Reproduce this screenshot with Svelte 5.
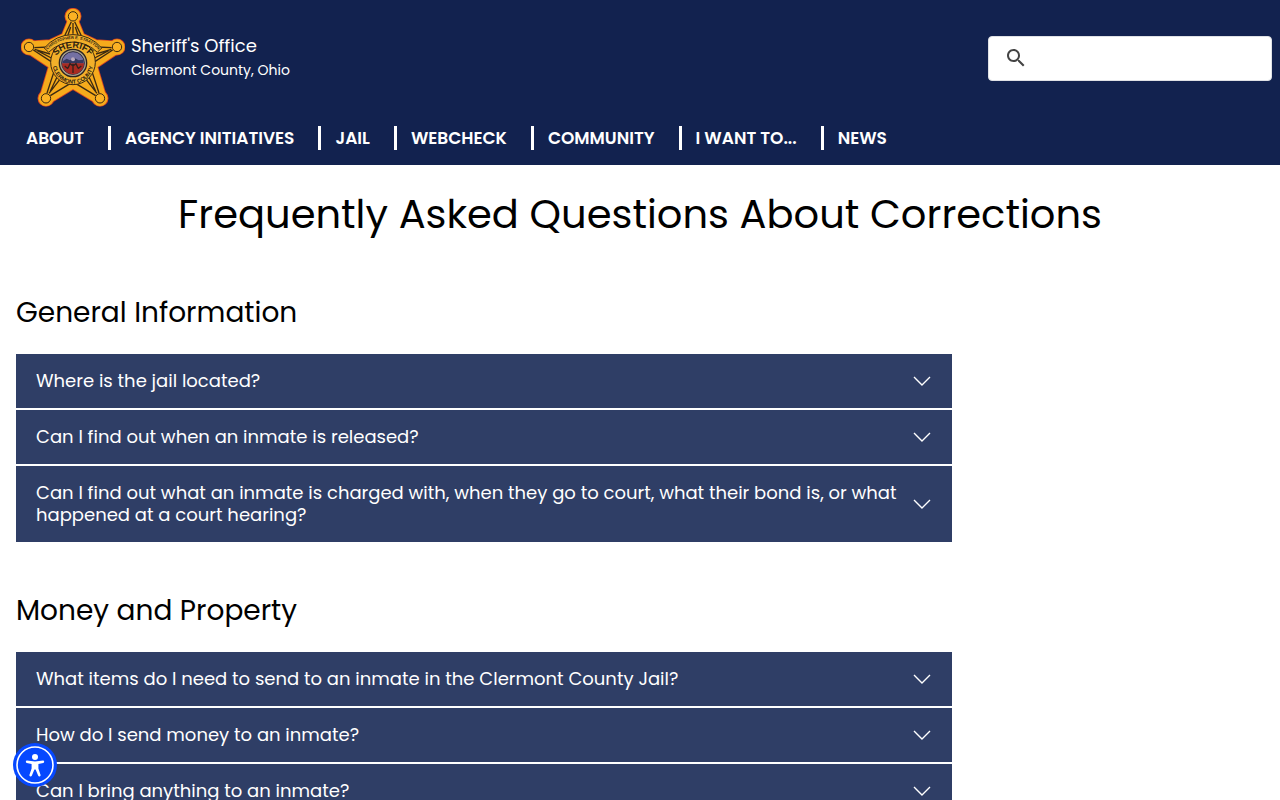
<script lang="ts">
  interface FaqItem {
    question: string;
    answer:   string;
  }

  interface FaqSection {
    title: string;
    items: FaqItem[];
  }

  const navItems = [
    'About',
    'Agency Initiatives',
    'Jail',
    'WebCheck',
    'Community',
    'I Want To...',
    'News',
  ];

  const sections: FaqSection[] = [
    {
      title: 'General Information',
      items: [
        { question: 'Where is the jail located?', answer: '' },
        { question: 'Can I find out when an inmate is released?', answer: '' },
        {
          question: 'Can I find out what an inmate is charged with, when they go to court, what their bond is, or what happened at a court hearing?',
          answer: '',
        },
      ],
    },
    {
      title: 'Money and Property',
      items: [
        { question: 'What items do I need to send to an inmate in the Clermont County Jail?', answer: '' },
        { question: 'How do I send money to an inmate?', answer: '' },
        { question: 'Can I bring anything to an inmate?', answer: '' },
      ],
    },
  ];

  // ball tips of the badge, clockwise from the top
  const tips = [
    { x: 189, y: 52 },
    { x: 321, y: 144 },
    { x: 270, y: 298 },
    { x: 108, y: 298 },
    { x: 57,  y: 144 },
  ];

  const starPath = 'M176 66 L202 66 L219 108 L258 126 L313 130 L326 158 L259 203 L285 291 L258 309 L189 267 L120 309 L93 291 L119 203 L52 158 L65 130 L120 126 L159 108 Z';

  let openKey = $state('');
  let query   = $state('');

  function toggle(key: string) {
    openKey = openKey === key ? '' : key;
  }
</script>

<header class="site-header">
  <div class="top-row">
    <a class="brand" href="#home">
      <svg class="badge" viewBox="33 27 312 300" aria-hidden="true">
        <defs>
          <path id="arc-name" d="M111 154 A106 106 0 0 1 267 154" />
          <path id="arc-sheriff" d="M134 176 A66 66 0 0 1 244 176" />
          <path id="arc-county" d="M128 193 A61 61 0 0 0 250 193" />
        </defs>
        <g class="rim">
          <path d={starPath} />
          {#each tips as tip}
            <circle cx={tip.x} cy={tip.y} r="20" />
          {/each}
        </g>
        <g class="gold">
          <path d={starPath} />
          {#each tips as tip}
            <circle cx={tip.x} cy={tip.y} r="20" />
          {/each}
        </g>
        <g class="rays">
          <path d="M184 68 L164 110 M194 68 L214 110 M189 72 V104 M182 84 L174 108 M196 84 L204 108" />
          <path d="M305 146 L260 144 M308 153 L251 190 M304 151 L258 165 M296 155 L254 177" />
          <path d="M73 146 L118 144 M70 153 L127 190 M74 151 L120 165 M82 155 L124 177" />
          <path d="M267 282 L244 212 M257 290 L193 251 M261 283 L224 236 M257 276 L234 228" />
          <path d="M111 282 L134 212 M121 290 L185 251 M117 283 L154 236 M121 276 L144 228" />
        </g>
        {#each tips as tip}
          <circle class="tip" cx={tip.x} cy={tip.y} r="14" />
        {/each}
        <circle class="disc" cx="189" cy="190" r="67" />
        <path class="banner" d="M103 147 A112 112 0 0 1 275 147 L262 160 A102 102 0 0 0 116 160 Z" />
        <circle class="seal-ring" cx="189" cy="192" r="41" />
        <circle class="sky" cx="189" cy="192" r="34" />
        <path class="hills" d="M158 187 L170 179 L180 184 L192 176 L206 184 L220 182 V193 H158 Z" />
        <path class="field" d="M156 193 H222 A33 33 0 0 1 156 193 Z" />
        <path class="sheaf" d="M174 208 L180 194 L189 201 L198 194 L204 208 M189 194 V222 M164 201 L174 209 M214 201 L204 209" />
        <circle class="sun" cx="189" cy="181" r="6" />
        <text class="name-text" text-anchor="middle"><textPath href="#arc-name" startOffset="50%">CHRISTOPHER E. STRATTON</textPath></text>
        <text class="sheriff-text" text-anchor="middle"><textPath href="#arc-sheriff" startOffset="50%">SHERIFF</textPath></text>
        <text class="county-text" text-anchor="middle"><textPath href="#arc-county" startOffset="50%">CLERMONT COUNTY</textPath></text>
      </svg>
      <span class="brand-text">
        <span class="brand-name">Sheriff's Office</span>
        <span class="brand-place">Clermont County, Ohio</span>
      </span>
    </a>

    <form class="search" role="search" onsubmit={(e) => e.preventDefault()}>
      <button class="search-button" type="submit" aria-label="Search">
        <svg viewBox="0 0 24 24" aria-hidden="true">
          <path d="M15.5 14h-.79l-.28-.27C15.41 12.59 16 11.11 16 9.5 16 5.91 13.09 3 9.5 3S3 5.91 3 9.5 5.91 16 9.5 16c1.61 0 3.09-.59 4.23-1.57l.27.28v.79l5 4.99L20.49 19l-4.99-5zm-6 0C7.01 14 5 11.99 5 9.5S7.01 5 9.5 5 14 7.01 14 9.5 11.99 14 9.5 14z" />
        </svg>
      </button>
      <input type="text" aria-label="Search the site" bind:value={query} />
    </form>
  </div>

  <nav class="main-nav" aria-label="Main">
    {#each navItems as item}
      <a href="#nav">{item}</a>
    {/each}
  </nav>
</header>

<main>
  <h1>Frequently Asked Questions About Corrections</h1>

  {#each sections as section}
    <section>
      <h2>{section.title}</h2>
      <div class="accordion">
        {#each section.items as item}
          <div>
            <button
              class="question"
              type="button"
              aria-expanded={openKey === item.question}
              onclick={() => toggle(item.question)}
            >
              <span>{item.question}</span>
              <svg class="chevron" viewBox="0 0 20 10" aria-hidden="true">
                <path d="M2 1 L10 9 L18 1" />
              </svg>
            </button>
            {#if openKey === item.question && item.answer}
              <p class="answer">{item.answer}</p>
            {/if}
          </div>
        {/each}
      </div>
    </section>
  {/each}
</main>

<button class="a11y" type="button" aria-label="Accessibility menu">
  <svg viewBox="0 0 44 44" aria-hidden="true">
    <circle class="a11y-ring" cx="22" cy="22" r="18" />
    <circle cx="22" cy="14" r="3" />
    <path d="M14 17.6 Q22 19.2 30 17.6 Q31.2 17.6 31.2 18.7 Q31.2 19.7 30.2 20 L25.4 21 V25.4 L27.6 32 Q27.7 33.2 26.6 33.5 Q25.6 33.6 25.1 32.6 L22.6 26.6 H21.4 L18.9 32.6 Q18.4 33.6 17.4 33.5 Q16.3 33.2 16.4 32 L18.6 25.4 V21 L13.8 20 Q12.8 19.7 12.8 18.7 Q12.8 17.6 14 17.6 Z" />
  </svg>
</button>

<style>
  :global(body) {
    margin: 0;
    background: #fff;
    color: #000;
    font-family: Poppins, Inter, sans-serif;
    overflow-x: hidden;
  }

  .site-header {
    background: #12224f;
    color: #fff;
    padding: 8px 8px 15px 21px;
  }

  .top-row {
    display: flex;
    justify-content: space-between;
    align-items: center;
  }

  .brand {
    display: flex;
    align-items: center;
    gap: 6px;
    color: inherit;
    text-decoration: none;
  }

  .badge {
    display: block;
    width: 104px;
    height: 100px;
  }

  .rim path,
  .rim circle {
    fill: #d8431f;
    stroke: #d8431f;
    stroke-width: 11;
    stroke-linejoin: round;
  }

  .gold path,
  .gold circle {
    fill: #f6ab1c;
    stroke: #f6ab1c;
    stroke-width: 6;
    stroke-linejoin: round;
  }

  .rays {
    fill: none;
    stroke: #3b2a12;
    stroke-width: 4;
  }

  .tip {
    fill: #fbb224;
    stroke: #3b2a12;
    stroke-width: 3;
  }

  .banner,
  .disc {
    fill: #f2b02a;
    stroke: #3b2a12;
    stroke-width: 3;
  }

  .seal-ring {
    fill: #a9a08c;
    stroke: #2a2320;
    stroke-width: 4;
  }

  .sky {
    fill: #7470a3;
    stroke: #2c2a3c;
    stroke-width: 3;
  }

  .hills {
    fill: #34385e;
  }

  .field {
    fill: #a92a20;
  }

  .sheaf {
    fill: none;
    stroke: #33211c;
    stroke-width: 4;
  }

  .sun {
    fill: #b9a9bd;
  }

  .name-text,
  .sheriff-text,
  .county-text {
    fill: #2c200f;
    font-family: "Liberation Sans", sans-serif;
    font-weight: 700;
  }

  .name-text {
    font-size: 12px;
  }

  .sheriff-text {
    font-size: 27px;
  }

  .county-text {
    font-size: 17px;
  }

  .brand-text {
    display: flex;
    flex-direction: column;
  }

  .brand-name {
    font-size: 18px;
    line-height: 24px;
  }

  .brand-place {
    font-size: 14px;
    line-height: 24px;
  }

  .search {
    display: flex;
    align-items: center;
    box-sizing: border-box;
    width: 284px;
    height: 45px;
    padding: 0 15px;
    gap: 8px;
    background: #fff;
    border: 1px solid #dfe1e5;
    border-radius: 4px;
  }

  .search-button {
    display: flex;
    padding: 0;
    border: 0;
    background: none;
    cursor: pointer;
  }

  .search-button svg {
    width: 24px;
    height: 24px;
    fill: #444;
  }

  .search input {
    flex: 1;
    min-width: 0;
    border: 0;
    outline: 0;
    background: transparent;
    font: inherit;
    font-size: 16px;
  }

  .main-nav {
    display: flex;
    flex-wrap: wrap;
    padding-top: 18px;
  }

  .main-nav a {
    padding: 0 24px 0 14px;
    border-right: 3px solid #fff;
    color: #fff;
    font-size: 17px;
    font-weight: 600;
    line-height: 24px;
    text-decoration: none;
    text-transform: uppercase;
  }

  .main-nav a:first-child {
    padding-left: 5px;
  }

  .main-nav a:last-child {
    border-right: 0;
  }

  main {
    padding: 0 16px;
  }

  h1 {
    margin: 24px 0 0;
    font-size: 40px;
    font-weight: 400;
    line-height: 50px;
    text-align: center;
  }

  h2 {
    margin: 0 0 23px;
    font-size: 28px;
    font-weight: 400;
    line-height: 36px;
  }

  section {
    width: 75%;
    margin-top: 51px;
  }

  h1 + section {
    margin-top: 56px;
  }

  .accordion {
    display: flex;
    flex-direction: column;
    gap: 2px;
  }

  .question {
    display: flex;
    justify-content: space-between;
    align-items: center;
    gap: 8px;
    width: 100%;
    padding: 16px 20px;
    border: 0;
    background: #2f3e66;
    color: #fff;
    font-family: inherit;
    font-size: 18px;
    line-height: 22px;
    text-align: left;
    cursor: pointer;
  }

  .chevron {
    flex-shrink: 0;
    width: 20px;
    height: 10px;
    fill: none;
    stroke: #fff;
    stroke-width: 1.4;
  }

  .answer {
    margin: 0;
    padding: 16px 20px;
    font-size: 16px;
    line-height: 24px;
  }

  .a11y {
    position: fixed;
    left: 13px;
    bottom: 13px;
    width: 44px;
    height: 44px;
    padding: 0;
    border: 0;
    border-radius: 50%;
    background: #0648ff;
    cursor: pointer;
  }

  .a11y svg {
    display: block;
    fill: #fff;
  }

  .a11y-ring {
    fill: none;
    stroke: #fff;
    stroke-width: 1.6;
  }
</style>
